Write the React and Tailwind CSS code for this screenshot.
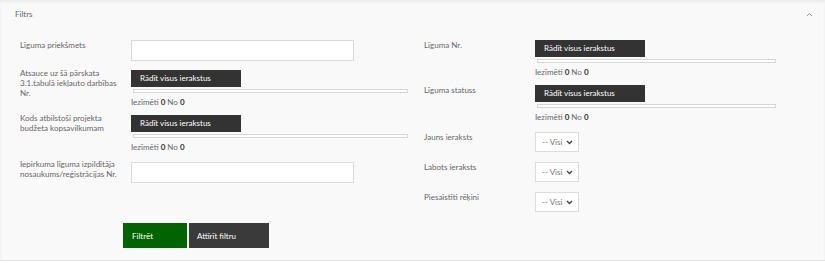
import React from "react";

const font = { fontFamily: 'Lato, "Noto Sans", sans-serif' };

const MultiSelect = ({ barWidth }) => (
    <div className="flex flex-col shrink-0">
        <div className="w-[110px] h-[17px] bg-[#333333] text-white text-[8px] leading-[17px] pl-[9px]">
            Rādīt visus ierakstus
        </div>
        <div className={`${barWidth} h-[4px] mt-[2px] ml-[2px] border border-[#d5d5d5] bg-white`}></div>
        <div className="mt-[4px] text-[8px] leading-[10px] text-[#666]">
            Iezīmēti <b className="text-[#333]">0</b> No <b className="text-[#333]">0</b>
        </div>
    </div>
);

const VisiSelect = () => (
    <div className="w-[44px] h-[20px] shrink-0 bg-white border border-[#dcdcdc] flex items-center justify-between pl-[6px] pr-[5px] text-[8px] text-[#777]">
        <span>-- Visi</span>
        <svg width="7" height="5" viewBox="0 0 7 5">
            <path d="M1 1 L3.5 3.5 L6 1" stroke="#444" strokeWidth="1.4" fill="none" />
        </svg>
    </div>
);

const Label = ({ children }) => (
    <div className="w-[111px] shrink-0 pr-[10px] text-[8px] leading-[10px] text-[#666]">{children}</div>
);

const App = () => {
    return (
        <div className="w-[825px] h-[263px] bg-white" style={font}>
            <div className="h-[261px] bg-[#f9f9f9] border-b border-[#e2e2e2] shadow-[inset_0_2px_3px_rgba(0,0,0,0.06)]">
                {/* Header */}
                <div className="flex items-center justify-between h-[28px] pl-[15px] pr-[12px]">
                    <span className="text-[8px] text-[#666]">Filtrs</span>
                    <svg width="7" height="5" viewBox="0 0 7 5">
                        <path d="M1 4 L3.5 1.5 L6 4" stroke="#999" strokeWidth="1" fill="none" />
                    </svg>
                </div>

                {/* Two columns */}
                <div className="flex mt-[12px]">
                    {/* Left */}
                    <div className="w-[424px] shrink-0 pl-[20px] flex flex-col">
                        <div className="flex h-[30px]">
                            <Label>Līguma priekšmets</Label>
                            <div className="w-[223px] h-[21px] shrink-0 bg-white border border-[#dadada]"></div>
                        </div>
                        <div className="flex h-[45px]">
                            <Label><div className="-mt-[2px]">Atsauce uz šā pārskata 3.1.tabulā iekļauto darbības Nr.</div></Label>
                            <MultiSelect barWidth="w-[275px]" />
                        </div>
                        <div className="flex h-[47px]">
                            <Label><div className="-mt-[2px]">Kods atbilstoši projekta budžeta kopsavilkumam</div></Label>
                            <MultiSelect barWidth="w-[275px]" />
                        </div>
                        <div className="flex h-[21px]">
                            <Label><div className="-mt-[3px]">Iepirkuma līguma izpildītāja nosaukums/reģistrācijas Nr.</div></Label>
                            <div className="w-[223px] h-[21px] shrink-0 bg-white border border-[#dadada]"></div>
                        </div>
                    </div>

                    {/* Right */}
                    <div className="flex flex-col">
                        <div className="flex h-[45px]">
                            <Label>Līguma Nr.</Label>
                            <MultiSelect barWidth="w-[239px]" />
                        </div>
                        <div className="flex h-[47px]">
                            <Label>Līguma statuss</Label>
                            <MultiSelect barWidth="w-[239px]" />
                        </div>
                        <div className="flex h-[30px]">
                            <Label>Jauns ieraksts</Label>
                            <VisiSelect />
                        </div>
                        <div className="flex h-[30px]">
                            <Label>Labots ieraksts</Label>
                            <VisiSelect />
                        </div>
                        <div className="flex h-[20px]">
                            <Label>Piesaistīti rēķini</Label>
                            <VisiSelect />
                        </div>
                    </div>
                </div>

                {/* Actions */}
                <div className="flex gap-[2px] ml-[123px] mt-[11px]">
                    <button className="w-[64px] h-[25px] bg-[#006400] text-white text-[8px] text-left pl-[9px]">
                        Filtrēt
                    </button>
                    <button className="w-[80px] h-[25px] bg-[#3a3a3a] text-white text-[8px] text-left pl-[8px]">
                        Attīrīt filtru
                    </button>
                </div>
            </div>
        </div>
    );
};

export default App;
